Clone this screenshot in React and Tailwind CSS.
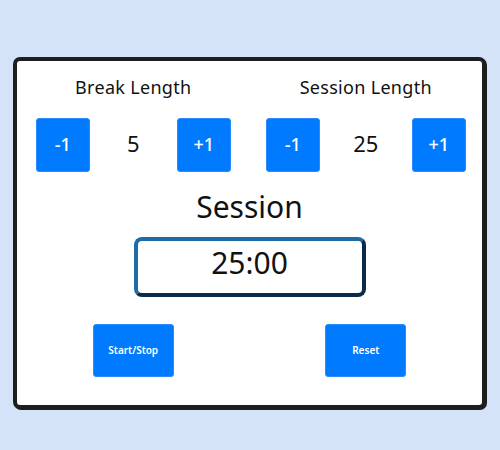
import React from "react";

function Btn({ children, className = "" }) {
  return (
    <button
      className={`bg-[#007bff] border border-[#2a8bff] rounded-[3px] text-white flex items-center justify-center ${className}`}
    >
      {children}
    </button>
  );
}

function Control({ label, value, numW }) {
  return (
    <div className="flex-1 flex flex-col items-center">
      <div className="text-[18px] leading-[24px] tracking-[0.3px] text-[#111]">{label}</div>
      <div className="flex items-center mt-[19px]">
        <Btn className="w-[54px] h-[54px] text-[18px] font-medium pb-[2px]">-1</Btn>
        <div className={`${numW} text-center text-[22px] leading-[28px] pb-[4px] text-[#111]`}>{value}</div>
        <Btn className="w-[54px] h-[54px] text-[18px] font-medium pb-[2px]">+1</Btn>
      </div>
    </div>
  );
}

export default function App() {
  return (
    <div
      className="w-[500px] h-[450px] bg-[#d4e3f8] pt-[57px] pl-[13px]"
      style={{ fontFamily: '"Noto Sans", sans-serif' }}
    >
      <div className="w-[473px] h-[352px] bg-white border-[4px] border-[#1e1e1e] rounded-[7px] shadow-[1px_1px_0_#1e1e1e] flex flex-col">
        <div className="flex mt-[14px]">
          <Control label="Break Length" value="5" numW="w-[87px]" />
          <Control label="Session Length" value="25" numW="w-[92px]" />
        </div>
        <div className="text-center text-[30px] leading-[36px] mt-[17px] text-[#111]">Session</div>
        <div className="flex justify-center mt-[12px]">
          <div className="w-[232px] h-[60px] rounded-[8px] border-[4px] border-t-[#1f6ba6] border-l-[#1f6ba6] border-b-[#0c2b48] border-r-[#0c2b48] flex items-center justify-center text-[30px] leading-[36px] pb-[8px] text-[#111]">
            25:00
          </div>
        </div>
        <div className="flex mt-[27px]">
          <div className="flex-1 flex justify-center">
            <Btn className="w-[81px] h-[53px] text-[10px] font-semibold">Start/Stop</Btn>
          </div>
          <div className="flex-1 flex justify-center">
            <Btn className="w-[81px] h-[53px] text-[10px] font-semibold">Reset</Btn>
          </div>
        </div>
      </div>
    </div>
  );
}
